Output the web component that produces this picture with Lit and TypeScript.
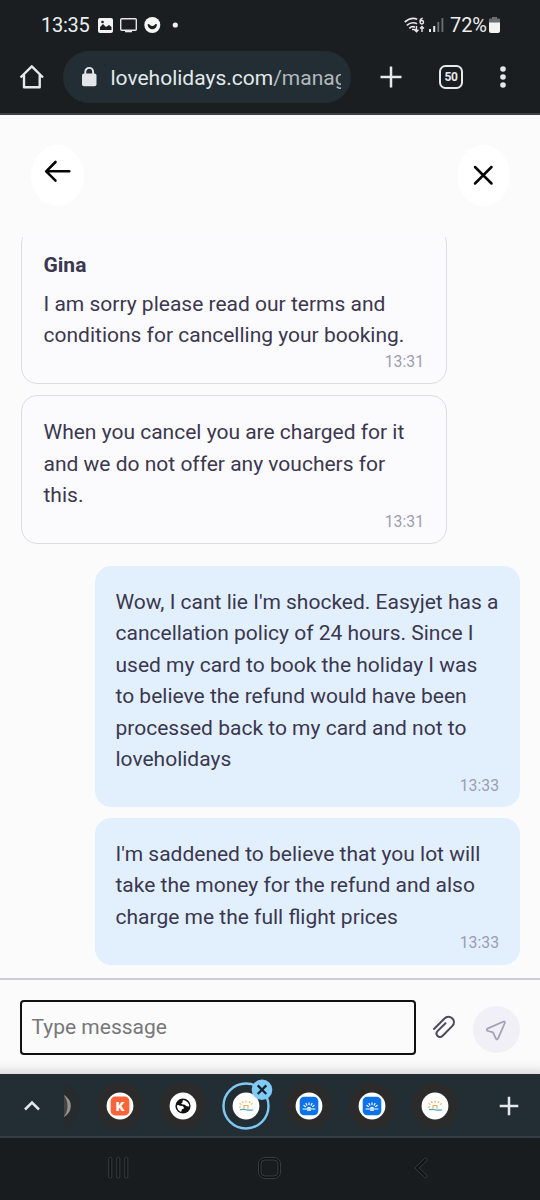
import { LitElement, html, css, svg } from "lit";
import { customElement, property } from "lit/decorators.js";

interface Message {
  author?: string;
  mine?: boolean;
  lines: string[];
  time: string;
}

const MESSAGES: Message[] = [
  {
    author: "Gina",
    lines: ["I am sorry please read our terms and", "conditions for cancelling your booking."],
    time: "13:31",
  },
  {
    lines: ["When you cancel you are charged for it", "and we do not offer any vouchers for", "this."],
    time: "13:31",
  },
  {
    mine: true,
    lines: [
      "Wow, I cant lie I'm shocked. Easyjet has a",
      "cancellation policy of 24 hours. Since I",
      "used my card to book the holiday I was",
      "to believe the refund would have been",
      "processed back to my card and not to",
      "loveholidays",
    ],
    time: "13:33",
  },
  {
    mine: true,
    lines: [
      "I'm saddened to believe that you lot will",
      "take the money for the refund and also",
      "charge me the full flight prices",
    ],
    time: "13:33",
  },
];

@customElement("status-bar")
class StatusBar extends LitElement {
  static styles = css`
    :host { display: flex; align-items: center; height: 50px; box-sizing: border-box;
      padding: 0 40px 0 41px; color: #eceeef; font-size: 20px; }
    .clock { width: 48px; letter-spacing: -0.25px; white-space: nowrap; }
    .left { margin-left: 8px; }
    .right { margin-left: auto; }
    .battery-text { margin-left: 6px; width: 37px; letter-spacing: -0.1px; white-space: nowrap; }
    .battery { margin-left: 2px; }
    svg { display: block; flex: none; }
  `;
  render() {
    return html`
      <span class="clock">13:35</span>
      <svg class="left" width="84" height="20" viewBox="97 15 84 20">
        <rect x="98" y="18" width="15" height="15" rx="2" fill="#f2f3f3" />
        <path d="M100 30v-3l3-3 3 3 3-2 2.500 2v3z" fill="#1a1e20" />
        <circle cx="102.500" cy="22" r="1.300" fill="#1a1e20" />
        <rect x="120.700" y="18.700" width="15.600" height="11.600" rx="1" fill="none" stroke="#e4e6e7" stroke-width="1.400" />
        <path d="M125 30.500h7v1.800h-7z" fill="#e4e6e7" />
        <circle cx="152.300" cy="25" r="8" fill="#f5f6f6" />
        <path d="M147.500 24.500q1.800-1.200 2.400.6q2.400 2 4.800 0q.6-1.800 2.400-.6q-1 4.800-4.800 4.800t-4.800-4.800z" fill="#1a1e20" />
        <circle cx="175.300" cy="25" r="2.600" fill="#f2f3f3" />
      </svg>
      <svg class="right" width="40" height="20" viewBox="403 15 40 20">
        <g fill="none" stroke="#e4e6e7" stroke-width="1.700">
          <path d="M403.700 22q6.500-5.500 12.500-2.800M405.800 25.300q5-4.200 10.200-1.500M408.300 28.300q2.800-2.600 5.700-1" />
          <path d="M411 29.500h4.500M415.500 26v5.500m-2-1.800l2 2 2-2M421 32v-5.500m-1.900 2l1.900-2 1.900 2" stroke-width="1.400" />
          <path d="M421.800 18.300q-2.700.3-2.700 3.200" stroke-width="1.500" />
          <circle cx="420.800" cy="22.200" r="1.700" stroke-width="1.500" />
        </g>
        <path d="M428 29h2v3h-2zM432.200 26h2v6h-2z" fill="#e8eaea" />
        <path d="M436.400 22h1.800v10h-1.800zM440.500 18h1.800v14h-1.800z" fill="#6b7072" />
      </svg>
      <span class="battery-text">72%</span>
      <svg class="battery" width="11" height="20" viewBox="488 15 11 20">
        <path d="M491 17h5v1.500h2a1 1 0 0 1 1 1V24h-11v-4.500a1 1 0 0 1 1-1h2z" fill="#6a6e70" />
        <path d="M488 22.500h11V31a2 2 0 0 1-2 2h-7a2 2 0 0 1-2-2z" fill="#f2f3f3" />
      </svg>
    `;
  }
}

@customElement("browser-toolbar")
class BrowserToolbar extends LitElement {
  static styles = css`
    :host { display: flex; align-items: center; height: 65px; box-sizing: border-box;
      padding: 0 0 9.500px 0; border-bottom: 2px solid #3a4043; }
    svg { display: block; flex: none; }
    .home { margin-left: 18px; }
    .address { display: flex; align-items: center; margin-left: 17px; width: 288px; height: 52px;
      box-sizing: border-box; border-radius: 26px; background: #222e34; padding: 0 10px 0 17px; }
    .url { margin: 2px 0 0 12.500px; flex: 1; min-width: 0; overflow: hidden; white-space: nowrap;
      font-size: 21px; line-height: 30px; color: #e3e8ea; letter-spacing: 0; }
    .path { color: #b3babd; }
    .plus { margin-left: 28px; }
    .tabs { display: flex; align-items: center; justify-content: center; margin-left: 36px; width: 24px; height: 24px;
      box-sizing: border-box; border: 2.500px solid #e6e9ea; border-radius: 6.500px; color: #e6e9ea;
      font-size: 12px; font-weight: 700; letter-spacing: -0.3px; }
    .menu { margin-left: 36px; }
  `;
  render() {
    return html`
      <svg class="home" width="28" height="28" viewBox="18 63 28 28">
        <path d="M20.500 77.500L31.800 66.300 43 77.500M24 75v12.200h15.700V75" fill="none" stroke="#e6e9ea" stroke-width="2.400" stroke-linejoin="round" />
      </svg>
      <div class="address">
        <svg width="18" height="22" viewBox="80 66 18 22">
          <path d="M85.300 75v-3.200a3.900 3.900 0 0 1 7.800 0V75" fill="none" stroke="#e3e6e8" stroke-width="1.900" />
          <rect x="82" y="73.500" width="14.500" height="12.800" rx="2" fill="#e3e6e8" />
        </svg>
        <div class="url">loveholidays.com<span class="path">/manag</span></div>
      </div>
      <svg class="plus" width="24" height="24" viewBox="0 0 24 24">
        <path d="M12 1.500v21M1.500 12h21" stroke="#e6e9ea" stroke-width="2.500" />
      </svg>
      <div class="tabs">50</div>
      <svg class="menu" width="8" height="24" viewBox="0 0 8 24" fill="#e6e9ea">
        <circle cx="4" cy="4" r="2.800" /><circle cx="4" cy="12" r="2.800" /><circle cx="4" cy="20" r="2.800" />
      </svg>
    `;
  }
}

@customElement("chat-bubble")
class ChatBubble extends LitElement {
  static styles = css`
    :host { display: block; }
    .bubble { width: 425.500px; box-sizing: border-box; border: 1px solid #dcdce8; border-radius: 16px;
      padding: 21px 21.500px 10.500px; background: #fbfbfd; }
    .mine { margin-left: auto; background: #e2f0fe; border-color: #e2f0fe; padding: 20px 20px 9.500px; }
    .author { font-weight: 700; font-size: 21px; line-height: 32px; height: 40px; color: #3b374f; }
    .line { font-size: 21px; line-height: 31.500px; white-space: nowrap; color: #3b374f; }
    .time { font-size: 15.750px; line-height: 22px; margin-top: -1px; text-align: right; color: #9c9cb1; }
  `;
  @property({ attribute: false }) message!: Message;
  render() {
    const m = this.message;
    return html`<div class="bubble ${m.mine ? "mine" : ""}">
      ${m.author ? html`<div class="author">${m.author}</div>` : ""}
      ${m.lines.map((l) => html`<div class="line">${l}</div>`)}
      <div class="time">${m.time}</div>
    </div>`;
  }
}

@customElement("tab-strip")
class TabStrip extends LitElement {
  static styles = css`
    :host { display: flex; align-items: center; height: 64px; box-sizing: border-box; background: #222e34;
      padding-top: 1px; border-bottom: 2px solid #363e45; }
    svg { display: block; flex: none; }
    .up { margin-left: 22px; }
    .clipped { margin-left: 20px; }
    .tabs { display: flex; gap: 15px; margin-left: 16px; }
    .add { margin-left: 36.500px; }
    .tab { overflow: visible; }
    .letter { font-size: 13.500px; font-weight: 900; }
  `;
  private sun() {
    return svg`<g fill="none" stroke-linecap="round">
      <path d="M22 26.300v-2.800h4v2.800M24 19v1.200M20.600 19.700l.5.900M27.800 19.700l-.5.900M18 21.700l.9.500M30.200 21.700l-.9.500M17.700 25.200l.8-.2" stroke="#e3b25a" stroke-width="1.200" />
      <path d="M18.500 27.700q3-.8 5.500 0t6.800.3" stroke="#4aa9ba" stroke-width="1.200" />
    </g>`;
  }
  private blueSun() {
    return svg`<rect x="14.700" y="14.700" width="18.600" height="18.600" rx="4.500" fill="#0b72e7" />
      <g fill="none" stroke="#fff" stroke-linecap="round">
        <path d="M24 20.800v1.800M21 21.500l.9 1.600M27 21.500l-.9 1.600M18.900 23.500l1.500 1M29.100 23.500l-1.500 1" stroke-width="1.200" />
        <path d="M21.800 26.500q.4-1.800 2.200-1.800t2.200 1.800z" fill="#fff" stroke="none" />
        <path d="M18 27h12M22.500 28.200h3" stroke-width="1.100" />
      </g>`;
  }
  private icon(kind: string) {
    if (kind === "k")
      return svg`<rect x="14.600" y="14.600" width="18.800" height="18.800" rx="4.500" fill="#f9643a" />
        <text class="letter" x="24" y="28.800" text-anchor="middle" fill="#fff">K</text>`;
    if (kind === "globe")
      return svg`<circle cx="24" cy="24" r="7.600" fill="#111" />
        <path d="M17.800 23.500q1.800-.9 3 .3l2.500.3q2 .6 1.600 2.300l-2 .8-.8 2.700q-3.800-1-4.300-6.400zM24.500 18q-1.800 1-.8 2.300l-1.600 1.300 1.500 1q2.300-.3 3 .8l1.300.9 2.500.3q-.3-5-5.900-6.600z" fill="#fff" />`;
    if (kind === "blue") return this.blueSun();
    return this.sun();
  }
  render() {
    const kinds = ["k", "globe", "active", "blue", "blue", "sun"];
    return html`
      <svg class="up" width="20" height="20" viewBox="0 0 20 20">
        <path d="M3 13.500L10 6.500 17 13.500" fill="none" stroke="#e1e7ea" stroke-width="2.500" />
      </svg>
      <svg class="clipped" width="18" height="48" viewBox="62 0 18 48">
        <path d="M64 2q15.500 7 15.500 22T64 46z" fill="#272b2d" />
        <path d="M64 13q6.800 4 6.800 11T64 35z" fill="#8f9394" />
        <path d="M64 13.500q3.500 4.500 3.500 10.500T64 34.500z" fill="#4c423d" />
      </svg>
      <div class="tabs">
        ${kinds.map(
          (k) => html`<svg class="tab" width="48" height="48" viewBox="0 0 48 48">
            ${k === "active"
              ? svg`<circle cx="24" cy="24" r="22.500" fill="#222e34" stroke="#7fc8f3" stroke-width="2.400" />`
              : svg`<circle cx="24" cy="24" r="23.500" fill="#2b2b2b" />`}
            <circle cx="24" cy="24" r="13.400" fill="#fff" />
            ${this.icon(k)}
            ${k === "active"
              ? svg`<circle cx="40" cy="7.700" r="10.300" fill="#82caf6" />
                <path d="M35.700 3.400l8.600 8.600M44.300 3.400l-8.600 8.600" stroke="#14242e" stroke-width="2.300" />`
              : ""}
          </svg>`,
        )}
      </div>
      <svg class="add" width="26" height="26" viewBox="0 0 26 26">
        <path d="M13 3.700v18.600M3.700 13h18.600" stroke="#e4e8ea" stroke-width="2.500" />
      </svg>
    `;
  }
}

@customElement("system-nav")
class SystemNav extends LitElement {
  static styles = css`
    :host { display: block; height: 62px; background: #181c1f; }
    svg { display: block; }
  `;
  render() {
    return html`<svg width="540" height="62" viewBox="0 1138 540 62" fill="none" stroke="#3b3f41" stroke-width=".9">
      <rect x="108.800" y="1157.500" width="3" height="20.500" rx="1" fill="#101315" />
      <rect x="116.800" y="1157.500" width="3" height="20.500" rx="1" fill="#101315" />
      <rect x="124.800" y="1157.500" width="3" height="20.500" rx="1" fill="#101315" />
      <rect x="258.500" y="1157.500" width="22" height="21" rx="6.500" fill="#101315" />
      <rect x="261" y="1160" width="17" height="16" rx="4" fill="#181c1f" />
      <path d="M425.500 1157.500l1.500 1.500v1.500l-8 7.500 8 7.500v1.500l-1.500 1.200-10.700-10.200z" fill="#101315" />
    </svg>`;
  }
}

@customElement("app-root")
class AppRoot extends LitElement {
  static styles = css`
    :host { display: flex; flex-direction: column; width: 540px; height: 1200px; overflow: hidden;
      background: #1a1e20; font-family: Roboto, sans-serif; }
    svg { display: block; flex: none; }
    status-bar, browser-toolbar, tab-strip, system-nav { flex: none; }
    .page { flex: 1; min-height: 0; display: flex; flex-direction: column; background: #fbfbfc; }
    .head { display: flex; justify-content: space-between; height: 122px; box-sizing: border-box;
      padding: 30px 30px 0 31px; }
    .round { width: 53px; height: 61px; border-radius: 50%; background: #fff; }
    .log { flex: 1; min-height: 0; overflow: hidden; display: flex; flex-direction: column;
      justify-content: flex-end; padding: 0 20px 13.500px 21px; }
    .sent { margin-top: 10.500px; }
    .received { margin-top: 11px; }
    .switch { margin-top: 21.500px; }
    .composer { display: flex; align-items: center; height: 96px; box-sizing: border-box; flex: none;
      border-top: 2px solid #cdcdd4; padding: 0 20px 0 20px;
      background: linear-gradient(#fbfbfc 85%, #f4f4f4 92%, #dedede); }
    .field { width: 396px; height: 55px; box-sizing: border-box; border: 2.500px solid #111;
      border-radius: 4px; background: #fbfbfc; padding: 0 9.500px; display: flex; align-items: center;
      font-size: 21px; color: #77777a; }
    .clip { margin-left: 14px; }
    .send { margin-left: 15px; width: 47px; height: 47px; border-radius: 50%; background: #f1f0f7; margin-top: 5px; }
  `;
  private spacing(i: number) {
    if (i === 0) return "";
    if (!MESSAGES[i].mine) return "received";
    return MESSAGES[i - 1].mine ? "sent" : "switch";
  }
  render() {
    return html`
      <status-bar></status-bar>
      <browser-toolbar></browser-toolbar>
      <main class="page">
        <div class="head">
          <div class="round">
            <svg width="53" height="61" viewBox="31 145 53 61">
              <path d="M55.500 162l-9.300 9.300 9.300 9.300M46.500 171.300H69.300" fill="none" stroke="#050505" stroke-width="2.600" stroke-linecap="round" stroke-linejoin="round" />
            </svg>
          </div>
          <div class="round">
            <svg width="53" height="61" viewBox="457 145 53 61">
              <path d="M475 167l16.500 16.500M491.500 167L475 183.500" stroke="#050505" stroke-width="2.500" stroke-linecap="round" />
            </svg>
          </div>
        </div>
        <div class="log">
          ${MESSAGES.map((m, i) => html`<chat-bubble class=${this.spacing(i)} .message=${m}></chat-bubble>`)}
        </div>
        <div class="composer">
          <div class="field">Type message</div>
          <svg class="clip" width="28" height="28" viewBox="430 1013 28 28">
            <path d="M434 1029l10.200-10.300c5.400-5.200 13 1.600 8.200 7.200l-9.700 9.900c-3.700 3.300-8.200-1.200-5.200-4.700l8-7.900" fill="none" stroke="#4c485d" stroke-width="2" stroke-linecap="round" stroke-linejoin="round" />
          </svg>
          <div class="send">
            <svg width="47" height="47" viewBox="472.500 1006 47 47">
              <path d="M503.200 1021.500l-15.800 6.900c-1.600.8-1.400 2.200.1 2.600l5 1.300 2.800 6.100c.7 1.500 1.800 1.400 2.300-.1l6.700-15.300c.3-1-.2-1.800-1.100-1.500z" fill="none" stroke="#a3a1b4" stroke-width="1.800" stroke-linejoin="round" />
            </svg>
          </div>
        </div>
      </main>
      <tab-strip></tab-strip>
      <system-nav></system-nav>
    `;
  }
}
